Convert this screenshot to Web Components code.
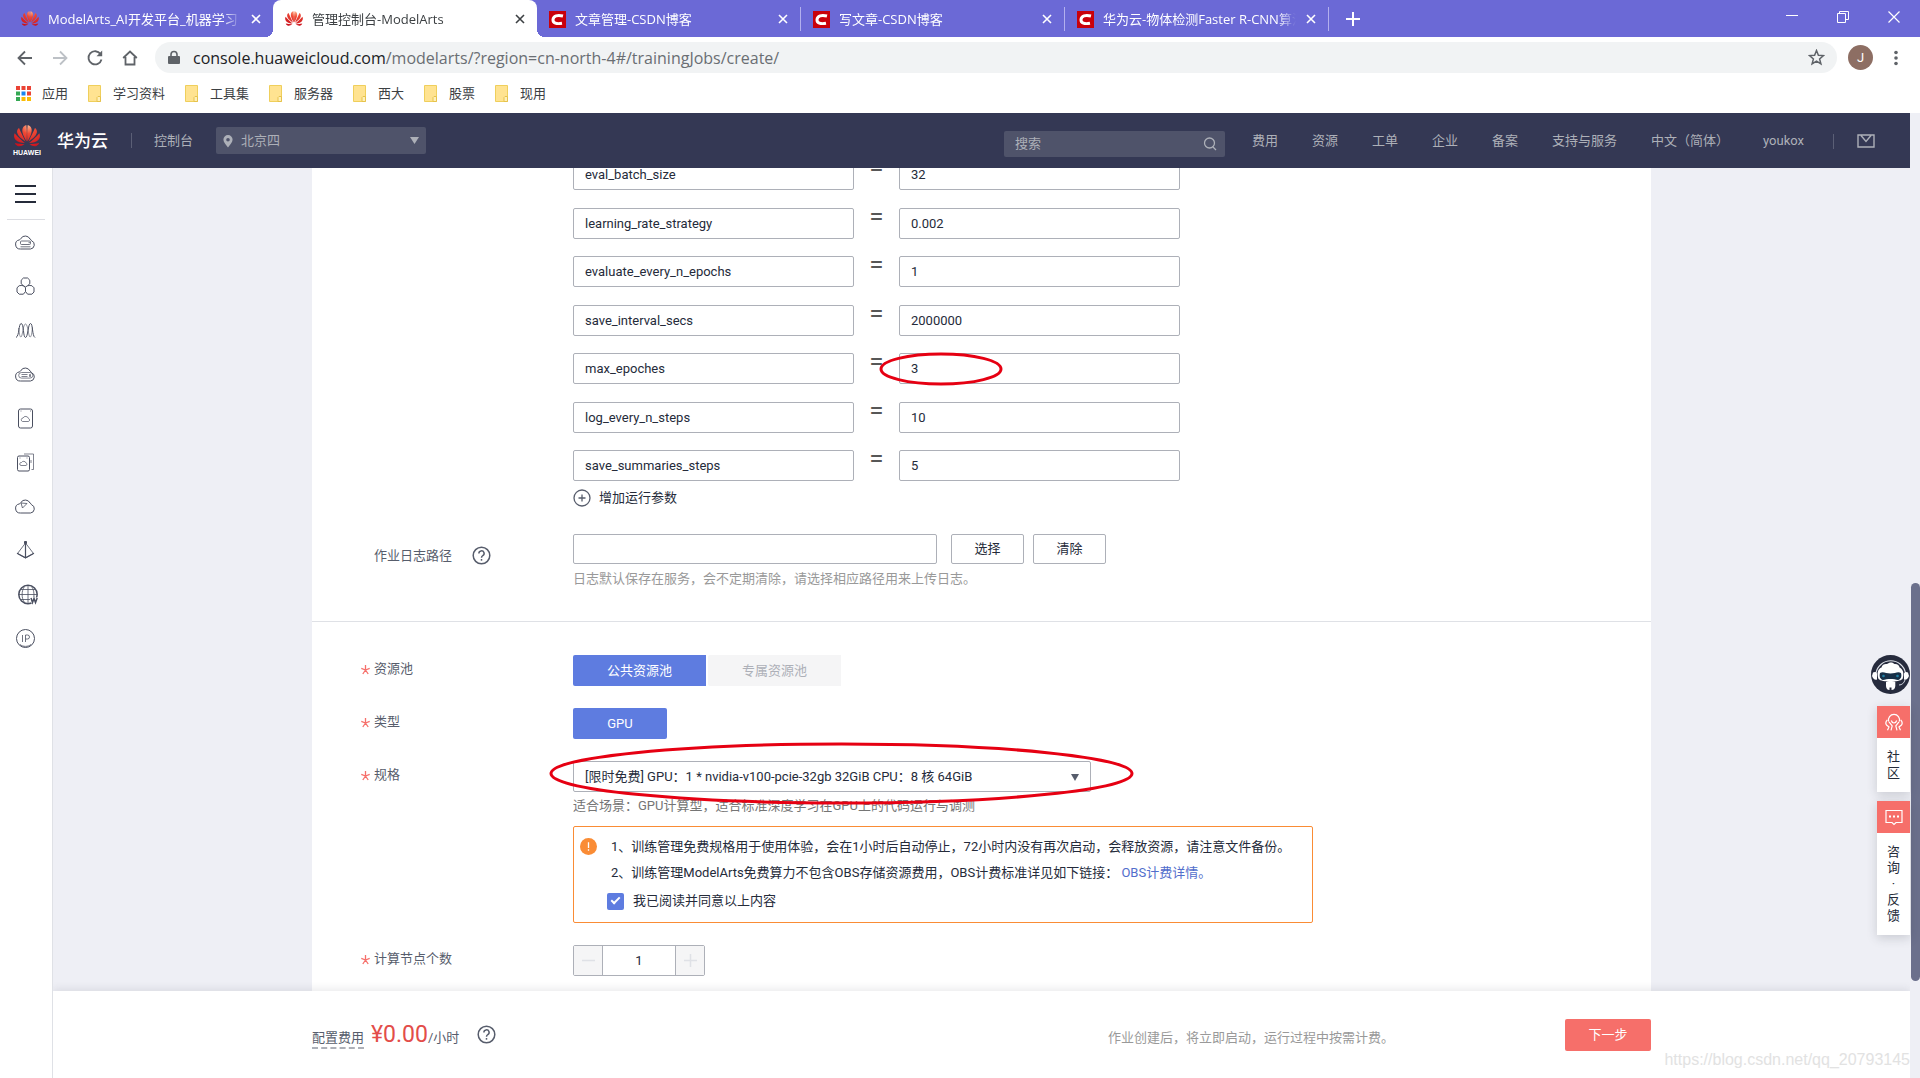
<!DOCTYPE html>
<html lang="zh-CN">
<head>
<meta charset="utf-8">
<title>管理控制台-ModelArts</title>
<style>
  html, body { margin: 0; height: 100%; }
  body {
    display: flex; flex-direction: column; overflow: hidden; background: #fff;
    font: 13px/20px Roboto, "Noto Sans CJK SC", sans-serif; color: #252b3a;
  }
  .viewport { flex: 1; min-height: 0; display: flex; }
  .page { flex: 1; min-width: 0; display: flex; flex-direction: column; position: relative; }
  .body { flex: 1; min-height: 0; display: flex; }
  .content { flex: 1; min-width: 0; display: flex; flex-direction: column; background: #eeeff5; }
</style>
</head>
<body>
<browser-chrome></browser-chrome>
<div class="viewport">
  <div class="page">
    <console-header></console-header>
    <div class="body">
      <side-nav></side-nav>
      <div class="content">
        <training-form></training-form>
        <price-footer></price-footer>
      </div>
    </div>
    <float-tools></float-tools>
  </div>
  <page-scrollbar></page-scrollbar>
</div>

<script>
const define = (name, html, setup) => {
  const template = document.createElement('template');
  template.innerHTML = html;
  customElements.define(name, class extends HTMLElement {
    constructor() {
      super();
      this.attachShadow({ mode: 'open' }).append(template.content.cloneNode(true));
    }
    connectedCallback() { if (setup) setup(this, this.shadowRoot); }
  });
};

/* ---------- brand marks ---------- */
define('huawei-mark', `
<style>
  :host { display: block; flex: none; width: 18px; height: 18px; }
  svg { display: block; width: 100%; height: 100%; }
</style>
<svg viewBox="0 0 32 28" aria-hidden="true">
  <defs>
    <radialGradient id="g" gradientUnits="userSpaceOnUse" cx="18" cy="1" r="27">
      <stop offset="0" stop-color="#ffb08a"/><stop offset=".35" stop-color="#ef4a35"/><stop offset="1" stop-color="#c9101c"/>
    </radialGradient>
  </defs>
  <g id="petals" fill="url(#g)">
    <path d="M15.500 20C12 14 9.500 9 10.500 4.500C11.200 1.800 13.200 .5 15.200 0C16 6 16 13 15.500 20Z"/>
    <path d="M14.300 20.500C9.500 17 5 13.500 4 9.500C3.400 6.800 4.600 4.700 6.300 3.500C8.500 9 12 15 14.300 20.500Z"/>
    <path d="M13.500 22C9 22 4.500 21 2 18C-.2 15.300 -.1 12.300 1 10C4.500 14.500 9.500 18.500 13.500 22Z"/>
    <path d="M13 23.500C10 25.500 7 26.500 4.500 25.500C2.800 24.800 1.800 23.500 1.300 22C5 23 9 23.300 13 23.500Z"/>
    <path d="M16.500 20C20 14 22.500 9 21.500 4.500C20.800 1.800 18.800 .5 16.800 0C16 6 16 13 16.500 20Z"/>
    <path d="M17.700 20.500C22.500 17 27 13.500 28 9.500C28.600 6.800 27.400 4.700 25.700 3.500C23.500 9 20 15 17.700 20.500Z"/>
    <path d="M18.500 22C23 22 27.500 21 30 18C32.200 15.300 32.100 12.300 31 10C27.500 14.500 22.500 18.500 18.500 22Z"/>
    <path d="M19 23.500C22 25.500 25 26.500 27.500 25.500C29.200 24.800 30.200 23.500 30.700 22C27 23 23 23.300 19 23.500Z"/>
  </g>
</svg>`);

define('csdn-mark', `
<style>:host { display: block; flex: none; width: 17px; height: 17px; } svg { display: block; }</style>
<svg width="17" height="17" viewBox="0 0 17 17" aria-hidden="true">
  <path fill="#c9000c" d="M0 0h17v17H0z"/>
  <path fill="none" stroke="#fff" stroke-width="3" d="M14 5C8.500 3.600 4.300 4.800 4 8.600C3.800 12.300 7.500 13.200 13 12.300"/>
</svg>`);

/* ---------- browser window ---------- */
define('browser-tab', `
<style>
  :host {
    display: flex; align-items: center; flex: 0 1 264px; min-width: 0; box-sizing: border-box; height: 37px;
    padding: 1px 10px 0 12px; color: #fff; position: relative; font: 13px/20px "Open Sans", "Noto Sans CJK SC", sans-serif;
  }
  :host([active]) { background: #fff; color: #3c4043; border-radius: 8px 8px 0 0; }
  :host([active])::before, :host([active])::after {
    content: ""; position: absolute; bottom: 0; width: 8px; height: 8px;
  }
  :host([active])::before { right: 100%; background: radial-gradient(circle at 0 0, transparent 8px, #fff 8px); }
  :host([active])::after { left: 100%; background: radial-gradient(circle at 100% 0, transparent 8px, #fff 8px); }
  :host([divided]) { border-right: 1px solid #a9a5ea; border-image: linear-gradient(transparent 8px, #b3b0ee 8px, #b3b0ee 30px, transparent 30px) 1; }
  .title { flex: 1; min-width: 0; overflow: hidden; white-space: nowrap; margin: 0 8px 0 9px;
    mask-image: linear-gradient(to right, #000 calc(100% - 18px), transparent); }
  button { flex: none; display: flex; border: 0; padding: 2px; background: none; color: inherit; }
</style>
<slot name="icon"></slot>
<span class="title"><slot></slot></span>
<button aria-label="关闭标签页"><svg width="10" height="10" viewBox="0 0 10 10"><path stroke="currentColor" stroke-width="1.600" d="M1 1l8 8M9 1L1 9"/></svg></button>`);

define('book-mark', `
<style>
  :host { display: flex; }
  a { display: flex; align-items: center; gap: 12px; color: #3c4043; text-decoration: none; }
</style>
<a href="#"><svg width="13" height="17" viewBox="0 0 13 17"><path d="M.5.5h12v16H.5z" fill="#ffe391" stroke="#efcf5c"/><path d="M9 16.500v-4l1-1h2.500v5z" fill="#fff0b8" stroke="#e6c24c"/></svg><slot></slot></a>`);

define('browser-chrome', `
<style>
  :host { display: block; flex: none; font-family: "Open Sans", "Noto Sans CJK SC", sans-serif; color: #3c4043; }
  .tabs { display: flex; background: #6b69d6; height: 37px; padding-left: 9px; color: #fff; }
  button { display: flex; border: 0; padding: 0; background: none; color: inherit; }
  .new { padding: 12px 17px; }
  .window { margin-left: auto; display: flex; gap: 39px; padding: 11px 20px 0 0; }
  .bar { display: flex; align-items: center; padding: 5px 20px 0 16px; height: 31px; color: #5f6368; }
  .nav { display: flex; gap: 17px; margin-right: 16px; }
  .address { flex: 1; display: flex; align-items: center; height: 31px; border-radius: 16px; background: #f1f3f4; padding: 0 12px; gap: 12px; }
  .url { flex: 1; font-size: 16px; color: #6a6e73; }
  .url b { font-weight: 400; color: #202124; }
  .avatar { width: 25px; height: 25px; border-radius: 50%; background: #8d6e63; color: #fff; margin: 0 19px 0 11px; justify-content: center; font: 13px/25px Roboto, sans-serif; }
  .marks { display: flex; gap: 20px; align-items: center; height: 40px; padding-left: 16px; }
  .apps { display: flex; align-items: center; gap: 11px; color: #3c4043; text-decoration: none; }
</style>
<div class="tabs">
  <browser-tab><huawei-mark slot="icon"></huawei-mark>ModelArts_AI开发平台_机器学习</browser-tab>
  <browser-tab active><huawei-mark slot="icon"></huawei-mark>管理控制台-ModelArts</browser-tab>
  <browser-tab divided><csdn-mark slot="icon"></csdn-mark>文章管理-CSDN博客</browser-tab>
  <browser-tab divided><csdn-mark slot="icon"></csdn-mark>写文章-CSDN博客</browser-tab>
  <browser-tab divided><csdn-mark slot="icon"></csdn-mark>华为云-物体检测Faster R-CNN算法</browser-tab>
  <button class="new" aria-label="新标签页"><svg width="14" height="14" viewBox="0 0 14 14"><path stroke="currentColor" stroke-width="2" d="M7 0v14M0 7h14"/></svg></button>
  <div class="window">
    <button aria-label="最小化"><svg width="12" height="12"><path stroke="currentColor" d="M0 4.500h12"/></svg></button>
    <button aria-label="还原"><svg width="12" height="12" fill="none"><path stroke="currentColor" d="M.5 2.500h8v9h-8zM2.500 2.500v-2h9v8h-3"/></svg></button>
    <button aria-label="关闭"><svg width="12" height="12"><path stroke="currentColor" stroke-width="1.200" d="M.5.500l11 11M11.500.500l-11 11"/></svg></button>
  </div>
</div>
<div class="bar">
  <div class="nav">
    <button aria-label="后退"><svg width="18" height="18" viewBox="0 0 18 18" fill="none" stroke="currentColor" stroke-width="1.800"><path d="M16 9H2.500M9 2.500L2.500 9L9 15.500"/></svg></button>
    <button aria-label="前进" style="color:#bdc1c6"><svg width="18" height="18" viewBox="0 0 18 18" fill="none" stroke="currentColor" stroke-width="1.800"><path d="M2 9h13.500M9 2.500L15.500 9L9 15.500"/></svg></button>
    <button aria-label="重新加载"><svg width="18" height="18" viewBox="0 0 18 18" fill="none" stroke="currentColor" stroke-width="1.800"><path d="M14.500 5A6.600 6.600 0 1 0 15.500 10.500"/><path d="M16.200 1.500v5.700h-5.700z" fill="currentColor" stroke="none"/></svg></button>
    <button aria-label="主页"><svg width="18" height="18" viewBox="0 0 18 18" fill="none" stroke="currentColor" stroke-width="1.800"><path d="M2.200 9L9 2.500L15.800 9M4.500 8v7.500h9V8"/></svg></button>
  </div>
  <div class="address">
    <svg width="14" height="16" viewBox="0 0 14 16"><path fill="#5f6368" d="M2 6h10a1 1 0 0 1 1 1v6a1 1 0 0 1-1 1H2a1 1 0 0 1-1-1V7a1 1 0 0 1 1-1z"/><path fill="none" stroke="#5f6368" stroke-width="1.600" d="M4 6.500V4.500a3 3 0 0 1 6 0v2"/></svg>
    <span class="url"><b>console.huaweicloud.com</b>/modelarts/?region=cn-north-4#/trainingJobs/create/</span>
    <button aria-label="收藏"><svg width="17" height="17" viewBox="0 0 17 17" fill="none" stroke="currentColor" stroke-width="1.500"><path d="M8.500 1.500L10.400 6.300L15.500 6.600L11.600 9.900L12.900 14.900L8.500 12.100L4.100 14.900L5.400 9.900L1.500 6.600L6.600 6.300Z"/></svg></button>
  </div>
  <button class="avatar" aria-label="用户">J</button>
  <button aria-label="菜单"><svg width="8" height="16" viewBox="0 0 8 16" fill="currentColor"><circle cx="4" cy="2.500" r="1.800"/><circle cx="4" cy="8" r="1.800"/><circle cx="4" cy="13.500" r="1.800"/></svg></button>
</div>
<div class="marks">
  <a class="apps" href="#"><svg width="15" height="15" viewBox="0 0 15 15"><path fill="#ea4335" d="M0 0h4v4H0zM5.500 0h4v4h-4zM11 0h4v4h-4z"/><path fill="#34a853" d="M0 5.500h4v4H0z"/><path fill="#1a86f0" d="M5.500 5.500h4v4h-4z"/><path fill="#ea4335" d="M11 5.500h4v4h-4z"/><path fill="#34a853" d="M0 11h4v4H0z"/><path fill="#fbbc05" d="M5.500 11h4v4h-4zM11 11h4v4h-4z"/></svg>应用</a>
  <book-mark>学习资料</book-mark><book-mark>工具集</book-mark><book-mark>服务器</book-mark><book-mark>西大</book-mark><book-mark>股票</book-mark><book-mark>现用</book-mark>
</div>`);

/* ---------- console header ---------- */
define('console-header', `
<style>
  :host { display: flex; align-items: center; flex: none; height: 55px; background: #343854; color: #adb0b8; padding: 0 35px 0 12px; position: relative; z-index: 2; }
  .logo { display: flex; flex-direction: column; align-items: center; width: 30px; color: #fff; font: bold 7px/9px "Liberation Sans", sans-serif; }
  huawei-mark { width: 28px; height: 23px; }
  .brand { font-size: 17px; font-weight: 500; color: #fff; margin-left: 15px; }
  i { width: 1px; height: 15px; background: #5b5f76; }
  .brand + i { margin: 0 22px 0 23px; }
  a { color: inherit; text-decoration: none; }
  .region { position: relative; display: flex; align-items: center; margin-left: 23px; width: 210px; height: 27px; border-radius: 2px; background: #4f536a; }
  .region svg { position: absolute; pointer-events: none; }
  .pin { left: 6px; } .arrow { right: 7px; }
  select, input { font: inherit; color: inherit; border: 0; outline: 0; background: none; padding: 0; margin: 0; }
  select { appearance: none; width: 100%; height: 100%; padding-left: 25px; }
  .search { display: flex; align-items: center; margin: 7px 27px 0 auto; width: 221px; height: 26px; border-radius: 2px; background: #4f536a; padding: 0 8px 0 11px; box-sizing: border-box; }
  .search input { flex: 1; min-width: 0; }
  input::placeholder { color: #adb0b8; opacity: 1; }
  nav { display: flex; gap: 34px; }
  nav + i { margin: 2px 23px 0 29px; }
</style>
<div class="logo"><huawei-mark></huawei-mark>HUAWEI</div>
<span class="brand">华为云</span><i></i>
<a href="#">控制台</a>
<div class="region">
  <svg class="pin" width="12" height="14" viewBox="0 0 12 14"><path fill="#adb0b8" fill-rule="evenodd" d="M6 1a4.600 4.600 0 0 1 4.600 4.700C10.600 8.500 7.500 11 6 13.500C4.500 11 1.400 8.500 1.400 5.700A4.600 4.600 0 0 1 6 1zM6 4a1.800 1.800 0 1 0 0 3.600A1.800 1.800 0 0 0 6 4z"/></svg>
  <select aria-label="区域"><option>北京四</option></select>
  <svg class="arrow" width="9" height="7"><path fill="#adb0b8" d="M0 0h9L4.500 7z"/></svg>
</div>
<div class="search"><input type="text" placeholder="搜索" aria-label="搜索">
  <svg width="14" height="14" viewBox="0 0 14 14" fill="none" stroke="#adb0b8" stroke-width="1.300"><circle cx="6.500" cy="6" r="5"/><path d="M10 10l3 3"/></svg></div>
<nav><a href="#">费用</a><a href="#">资源</a><a href="#">工单</a><a href="#">企业</a><a href="#">备案</a><a href="#">支持与服务</a><a href="#">中文（简体）</a><a href="#">youkox</a></nav>
<i></i>
<a href="#" aria-label="消息"><svg style="display:block" width="18" height="14" viewBox="0 0 18 14" fill="none" stroke="#adb0b8" stroke-width="1.400"><path d="M1 1h16v12H1zM4 1.500L9 7.500L14 1.500"/></svg></a>`);

/* ---------- service sidebar ---------- */
const cloud = '<path d="M5.500 16.500H15.500A4.300 4.300 0 0 0 16.500 8.200A3 3 0 0 0 15 6.500A5.200 5.200 0 0 0 6 5.800A3 3 0 0 1 4.300 7.400A4.600 4.600 0 0 0 5.500 16.500Z" transform="translate(0 .5)"/>';
define('side-nav', `
<style>
  :host { display: block; flex: none; width: 52px; background: #fff; border-right: 1px solid #dfe1e6; }
  button { display: flex; border: 0; background: none; padding: 17px 15px 15px; color: #252b3a; }
  hr { border: 0; border-top: 1px solid #dcdde2; margin: 0 7px; }
  ul { list-style: none; margin: 12px 0 0; padding: 0; }
  li { height: 44px; display: flex; padding-left: 15px; }
  a { color: #4a4f60; }
  svg { display: block; fill: none; stroke: currentColor; stroke-width: 1; }
</style>
<button aria-label="服务列表"><svg width="21" height="19" style="stroke-width:2"><path d="M0 1h21M0 9h21M0 17h21"/></svg></button>
<hr>
<ul></ul>`, (host, root) => {
  const icons = [
    ['弹性云服务器', cloud + '<path d="M6.500 9h8a1 1 0 0 1 1 1v1.500a1 1 0 0 1-1 1h-8a1 1 0 0 1-1-1V10a1 1 0 0 1 1-1zM13.500 10.700h1.500M5.500 14.800h10" stroke-width=".8"/>'],
    ['弹性伸缩', '<path d="M8.400 2h4.200l2.200 2.200v3.600l-2.200 1.900L10.500 11L8.400 9.700L6.200 7.800V4.200z"/><path d="M4.200 9.700L6.200 9.500L8.400 9.700L10.500 11.800V15.500L8.400 18.200H4.200L2 16V11.800zM12.600 9.700L14.800 9.500L16.900 9.700L19 11.800V16L16.900 18.200H12.600L10.500 15.500"/>'],
    ['专属主机', '<path d="M1 17.500C4.500 16 3.500 3.500 6.200 3.500S8 17.500 10.500 17.500S13 3.500 15.500 3.500S17 16 20 17.500"/><path stroke-width=".6" d="M3.500 8C4.500 13 4.500 17 6 17S8 4 10.500 4S13.500 17 15 17S16.800 13 17.500 7"/>'],
    ['裸金属服务器', cloud + '<path d="M6.500 8.500h8.500a2.800 2.800 0 0 1 0 5.600H6.500a2.800 2.800 0 0 1 0-5.600zM6.500 10.500h6M6.500 12.500h6M14.500 10.500h1v2h-1z" stroke-width=".7"/>'],
    ['云硬盘', '<rect x="3.500" y="1" width="14" height="19" rx="2"/><path stroke-width=".7" d="M5.500 3h1M15 3h1M7.500 13.500h6a1.600 1.600 0 0 0 0-3A3 3 0 0 0 8 10a1.800 1.800 0 0 0-.5 3.500z"/>'],
    ['专属存储', '<rect x="2.500" y="4" width="12" height="15" rx="1.500"/><path stroke-width=".7" d="M9 2h9.500v15.500h-2M4.500 6h1M11.500 6h1M16 8v3M6 13.500h5a1.300 1.300 0 0 0 0-2.500A2.500 2.500 0 0 0 6.500 10.500a1.500 1.500 0 0 0-.5 3z"/>'],
    ['对象存储', cloud + '<path stroke-width=".8" d="M6 7L12 7.500L7.500 12z"/>'],
    ['虚拟私有云', '<path stroke-width=".8" d="M10.500 3L2.500 13.500L10.500 18L18.500 13.500z"/><path d="M10.500 2v16M2 13.200l8.500 4.600l8.500-4.600" stroke-width="1.200"/><path d="M9.500 1.500h2v2h-2z" fill="currentColor"/>'],
    ['域名注册', '<g transform="translate(2.500 0)"><circle cx="10.500" cy="10.500" r="9.200" stroke-width="1.500"/><path stroke-width=".8" d="M10.500 1.500v18M1.500 10.500h18M3.500 5.500h14M3.500 15.500h9M7 2.500C3.800 7 3.800 14 7 18.500M14 2.500C16 5 16.800 9 16.400 13"/><path fill="#fff" stroke="none" d="M12 13.500h9v6h-7z"/><path stroke-width="1.500" d="M13.500 14l1.500 4.500l1.500-4l1.500 4l1.700-4.500"/></g>'],
    ['弹性公网IP', '<circle cx="10.500" cy="10.500" r="9"/><path d="M7.500 7v7M10.500 14V7h2a2 2 0 0 1 0 4h-2M5 16.500c3 2.500 8 2.500 11 0" stroke-width=".8"/>'],
  ];
  root.querySelector('ul').innerHTML = icons.map(([name, art]) =>
    `<li><a href="#" aria-label="${name}"><svg width="25" height="21" viewBox="0 0 25 21">${art}</svg></a></li>`).join('');
});

/* ---------- form parts ---------- */
define('help-icon', `
<style>:host { display: block; flex: none; } svg { display: block; }</style>
<svg width="19" height="19" viewBox="0 0 19 19" fill="none" stroke="#575d6c" stroke-width="1.500" role="img" aria-label="帮助"><circle cx="9.500" cy="9.500" r="8.300"/><path d="M6.900 7.500a2.600 2.600 0 1 1 3.900 2.200c-.9.500-1.300.9-1.300 2.100"/><path d="M9.500 13v1.700"/></svg>`);

define('red-ring', `
<style>:host { display: block; position: absolute; pointer-events: none; z-index: 1; } svg { display: block; width: 100%; height: 100%; overflow: visible; }</style>
<svg><ellipse cx="50%" cy="50%" rx="50%" ry="50%" fill="none" stroke="#e60012" stroke-width="3"/></svg>`);

define('param-row', `
<style>
  :host { display: flex; height: 31px; position: relative; }
  input { box-sizing: border-box; width: 281px; height: 31px; border: 1px solid #adb0b8; border-radius: 2px; padding: 0 11px; margin: 0; font: inherit; color: #252b3a; background: #fff; outline: 0; }
  span { width: 45px; text-align: center; font: 400 26px/16px Roboto, sans-serif; color: #575757; box-sizing: border-box; }
</style>
<input class="k" aria-label="参数名"><span>=</span><input class="v" aria-label="参数值"><slot></slot>`, (host, root) => {
  root.querySelector('.k').value = host.getAttribute('name');
  root.querySelector('.v').value = host.getAttribute('value');
});

define('form-row', `
<style>
  :host { display: flex; }
  .label { flex: none; width: 213px; display: flex; padding-top: 4px; color: #575d6c; box-sizing: border-box; }
  :host([low]) .label { padding-top: 12px; }
  .star { width: 14px; height: 20px; padding-left: 1px; box-sizing: border-box; visibility: hidden; }
  .star svg { display: block; }
  :host([required]) .star { visibility: visible; }
  .value { flex: 1; min-width: 0; }
</style>
<div class="label"><span class="star" aria-hidden="true"><svg width="9" height="20" viewBox="0 0 9 20"><path stroke="#f66f6a" stroke-width="1.300" d="M4.500 6v5M4.500 11L.3 9.300M4.500 11L8.700 9.300M4.500 11L1.800 15M4.500 11L7.200 15"/></svg></span><slot name="label"></slot></div>
<div class="value"><slot></slot></div>`);

define('notice-box', `
<style>
  :host { display: flex; box-sizing: border-box; max-width: 740px; border: 1px solid #fa8c35; border-radius: 2px; padding: 7px 6px 6px; gap: 14px; line-height: 26px; }
  svg { display: block; flex: none; margin-top: 4px; }
</style>
<svg width="17" height="17" viewBox="0 0 17 17"><circle cx="8.500" cy="8.500" r="8.500" fill="#fa8c35"/><path stroke="#fff" stroke-width="1.300" d="M8.500 4.200v5.800M8.500 11.300v1.500"/></svg>
<div><slot></slot></div>`);

define('training-form', `
<style>
  :host { flex: 1; min-height: 0; display: flex; flex-direction: column; justify-content: flex-end; align-items: center; overflow: hidden; }
  form { flex: none; width: 100%; max-width: 1339px; background: #fff; }
  section { padding: 33px 48px 15px; display: flex; flex-direction: column; gap: 22px; }
  section.params { padding: 0 48px 32px; gap: 26px; border-bottom: 1px solid #dfe1e6; }
  .list { display: flex; flex-direction: column; justify-content: space-between; height: 322px; }
  button, input, select { font: inherit; margin: 0; box-sizing: border-box; outline: 0; }
  .add { display: flex; align-items: center; gap: 8px; border: 0; padding: 0; margin-top: 7px; background: none; color: #252b3a; line-height: 20px; }
  .line { display: flex; gap: 9px; }
  .path { width: 364px; height: 30px; border: 1px solid #adb0b8; border-radius: 2px; margin-right: 5px; padding: 0 11px; }
  .plain { width: 73px; height: 30px; border: 1px solid #adb0b8; border-radius: 2px; background: #fff; color: #252b3a; padding: 0; }
  help-icon { margin-left: 20px; }
  .hint { margin: 5px 0 0; color: #999; }
  .hint.dark { color: #757575; margin: 4px 0 10px; }
  .seg { display: flex; gap: 2px; }
  .seg button { height: 31px; width: 133px; border: 0; padding: 0; border-radius: 2px 0 0 2px; background: #5e7ce0; color: #fff; }
  .seg button[disabled] { background: #f5f5f6; color: #adb0b8; }
  .seg .gpu { width: 94px; border-radius: 2px; }
  .pick { position: relative; display: flex; max-width: 518px; }
  .pick select { appearance: none; width: 100%; height: 31px; border: 1px solid #adb0b8; border-radius: 2px; background: #fff; color: #252b3a; padding: 0 11px; }
  .pick svg { position: absolute; right: 12px; top: 13px; pointer-events: none; }
  a { color: #526ecc; text-decoration: none; }
  .agree { display: flex; align-items: center; gap: 9px; line-height: 30px; margin-left: -4px; }
  .agree input { appearance: none; width: 17px; height: 17px; border-radius: 2px; background: #5e7ce0; display: grid; place-items: center; }
  .agree input::after { content: ""; width: 9px; height: 5px; border: solid #fff; border-width: 0 0 2px 2px; rotate: -45deg; margin-bottom: 3px; box-sizing: border-box; }
  .step { display: inline-flex; height: 31px; box-sizing: border-box; border: 1px solid #adb0b8; border-radius: 2px; vertical-align: top; }
  .step button { width: 28px; border: 0; padding: 0; background: #f5f5f6; display: grid; place-items: center; }
  .step input { width: 74px; border: solid #adb0b8; border-width: 0 1px; padding: 0; text-align: center; color: #252b3a; }
</style>
<form>
  <section class="params">
    <form-row>
      <div class="list">
        <param-row name="eval_batch_size" value="32"></param-row>
        <param-row name="learning_rate_strategy" value="0.002"></param-row>
        <param-row name="evaluate_every_n_epochs" value="1"></param-row>
        <param-row name="save_interval_secs" value="2000000"></param-row>
        <param-row name="max_epoches" value="3"><red-ring style="left:308px;top:1px;width:120px;height:30px"></red-ring></param-row>
        <param-row name="log_every_n_steps" value="10"></param-row>
        <param-row name="save_summaries_steps" value="5"></param-row>
      </div>
      <button type="button" class="add"><svg width="18" height="18" viewBox="0 0 18 18" fill="none" stroke="#575d6c" stroke-width="1.300"><circle cx="9" cy="9" r="8"/><path d="M9 5.500v7M5.500 9h7"/></svg>增加运行参数</button>
    </form-row>
    <form-row low>
      <label slot="label" for="log">作业日志路径</label><help-icon slot="label"></help-icon>
      <div class="line"><input class="path" id="log" type="text"><button type="button" class="plain">选择</button><button type="button" class="plain">清除</button></div>
      <p class="hint">日志默认保存在服务，会不定期清除，请选择相应路径用来上传日志。</p>
    </form-row>
  </section>
  <section>
    <form-row required>
      <span slot="label">资源池</span>
      <div class="seg"><button type="button">公共资源池</button><button type="button" disabled>专属资源池</button></div>
    </form-row>
    <form-row required>
      <span slot="label">类型</span>
      <div class="seg"><button type="button" class="gpu">GPU</button></div>
    </form-row>
    <form-row required>
      <label slot="label" for="flavor">规格</label>
      <div class="pick">
        <select id="flavor"><option>[限时免费] GPU：1 * nvidia-v100-pcie-32gb 32GiB CPU：8 核 64GiB</option></select>
        <svg width="8" height="7"><path fill="#575d6c" d="M0 0h8L4 7z"/></svg>
        <red-ring style="left:-22px;top:-17px;width:581px;height:59px"></red-ring>
      </div>
      <p class="hint dark">适合场景：GPU计算型，适合标准深度学习在GPU上的代码运行与调测</p>
      <notice-box>
        <div>1、训练管理免费规格用于使用体验，会在1小时后自动停止，72小时内没有再次启动，会释放资源，请注意文件备份。</div>
        <div>2、训练管理ModelArts免费算力不包含OBS存储资源费用，OBS计费标准详见如下链接： <a href="#">OBS计费详情。</a></div>
        <label class="agree"><input type="checkbox" checked>我已阅读并同意以上内容</label>
      </notice-box>
    </form-row>
    <form-row required>
      <label slot="label" for="nodes">计算节点个数</label>
      <div class="step">
        <button type="button" aria-label="减少"><svg width="13" height="13"><path stroke="#dfe1e6" stroke-width="1.500" d="M0 6.500h13"/></svg></button>
        <input id="nodes" type="text" value="1">
        <button type="button" aria-label="增加"><svg width="13" height="13"><path stroke="#dfe1e6" stroke-width="1.500" d="M0 6.500h13M6.500 0v13"/></svg></button>
      </div>
    </form-row>
  </section>
</form>`);

/* ---------- footer ---------- */
define('price-footer', `
<style>
  :host { display: flex; justify-content: center; flex: none; height: 87px; background: #fff; box-shadow: 0 -2px 8px rgba(37,43,58,.1); clip-path: inset(-12px 0 0 0); position: relative; }
  .inner { width: 100%; max-width: 1339px; display: flex; align-items: baseline; padding-top: 28px; box-sizing: border-box; }
  .fee { color: #575d6c; border-bottom: 2px dashed #adb0b8; line-height: 18px; }
  .price { color: #e34d49; font-size: 23px; line-height: 32px; margin-left: 7px; }
  .unit { color: #575d6c; }
  help-icon { margin-left: 18px; align-self: flex-start; padding-top: 6px; }
  .tip { margin-left: auto; color: #999; }
  button { width: 86px; height: 32px; border: 0; border-radius: 2px; padding: 0; margin-left: 171px; background: #f66f6a; color: #fff; font: inherit; align-self: flex-start; }
  .mark { position: absolute; right: 0; bottom: 8px; font: 16px/20px "Liberation Sans", Arial, sans-serif; color: #e2e2e2; }
</style>
<div class="inner">
  <span class="fee">配置费用</span><span class="price">¥0.00</span><span class="unit">/小时</span><help-icon></help-icon>
  <span class="tip">作业创建后，将立即启动，运行过程中按需计费。</span>
  <button type="button">下一步</button>
</div>
<span class="mark">https://blog.csdn.net/qq_20793145</span>`);

/* ---------- floating tools ---------- */
define('float-card', `
<style>
  :host { display: block; width: 33px; background: #fff; box-shadow: 0 3px 10px rgba(37,43,58,.18); text-align: center; line-height: 16px; color: #252b3a; }
  a { display: block; color: inherit; text-decoration: none; }
  .top { height: 32px; background: #f66f6a; display: grid; place-items: center; }
  .text { padding: 11px 10px; }
</style>
<a href="#"><div class="top"><slot name="icon"></slot></div><div class="text"><slot></slot></div></a>`);

define('float-tools', `
<style>
  :host { position: absolute; right: 0; bottom: 143px; display: flex; flex-direction: column; align-items: flex-end; gap: 9px; z-index: 2; }
  .bot { display: block; border: 0; padding: 0; background: none; margin-bottom: 3px; }
  svg { display: block; }
</style>
<button class="bot" aria-label="智能客服"><svg width="39" height="39" viewBox="0 0 39 39">
  <circle cx="19.500" cy="19.500" r="19.500" fill="#262b3d"/>
  <path d="M5 18A15 15 0 0 1 34.500 18" fill="none" stroke="#dfe3ea" stroke-width="1.200"/>
  <path d="M2 17.500c2-1 3.500-.5 4 1v6c-2 .8-4-.6-5-3.500zM37 17.500c-2-1-3.500-.5-4 1v6c2 .8 4-.6 5-3.500z" fill="#fff"/>
  <path d="M7.500 24C5.500 18 7 13.500 10.500 12.500C11 9.500 14 8.500 16 9C18.500 6.800 22 7 23.500 9C26.500 8.700 28.300 10.500 28.600 12.600C32 14 33.500 19 31.500 24C28 27.500 11 27.500 7.500 24Z" fill="#fff"/>
  <path d="M9 18C12 16 15 18.500 19.500 18.500S27 16 30 18C31 21 30 24.500 27 25C23 23.500 16 23.500 12 25C9 24.500 8 21 9 18Z" fill="#173048"/>
  <circle cx="12.500" cy="21" r="1.300" fill="#2080a4"/><circle cx="26.500" cy="21" r="1.300" fill="#2080a4"/>
  <path d="M15 27C17 25.800 22 25.800 24.300 27V31C24 33.500 23 35 20.500 35V32.500H18.500V35C16 35 15.200 33 15 31Z" fill="#fff"/>
  <path d="M34 25c-1 3-3 5-6 5" fill="none" stroke="#cfd4de"/>
</svg></button>
<float-card><svg slot="icon" width="18" height="18" viewBox="0 0 18 18" fill="none" stroke="#fff" stroke-width="1.200"><path d="M3.600 8.500A5.600 5.600 0 1 1 14.400 8.500M6.300 7.500c.5 1.700 1.500 2.500 2.700 2.500s2.200-.8 2.700-2.500"/><path d="M2.300 7C.8 8.500.5 10.500 1.500 12l2.500 2L2.500 17.300M15.700 7c1.500 1.500 1.800 3.500.8 5l-2.500 2l1.500 3.300M4 8.800L7.200 13L6 17.300M14 8.800L10.800 13L12 17.300"/></svg>社<br>区</float-card>
<float-card><svg slot="icon" width="18" height="17" viewBox="0 0 18 17" fill="none" stroke="#fff" stroke-width="1.200"><path d="M1 1.500h16v12h-6L9 15.500L7 13.500H1z"/><path stroke-width="1.800" d="M4 7.500h2M8 7.500h2M12 7.500h2"/></svg>咨<br>询<br>·<br>反<br>馈</float-card>`);

define('page-scrollbar', `
<style>
  :host { display: flex; flex-direction: column; flex: none; width: 10px; background: #eeeff5; }
  .before { flex: 470; } .after { flex: 97; }
  .thumb { flex: 398; background: #6b708c; border-radius: 5px; margin-left: 1px; }
</style>
<div class="before"></div><div class="thumb"></div><div class="after"></div>`);
</script>
</body>
</html>
